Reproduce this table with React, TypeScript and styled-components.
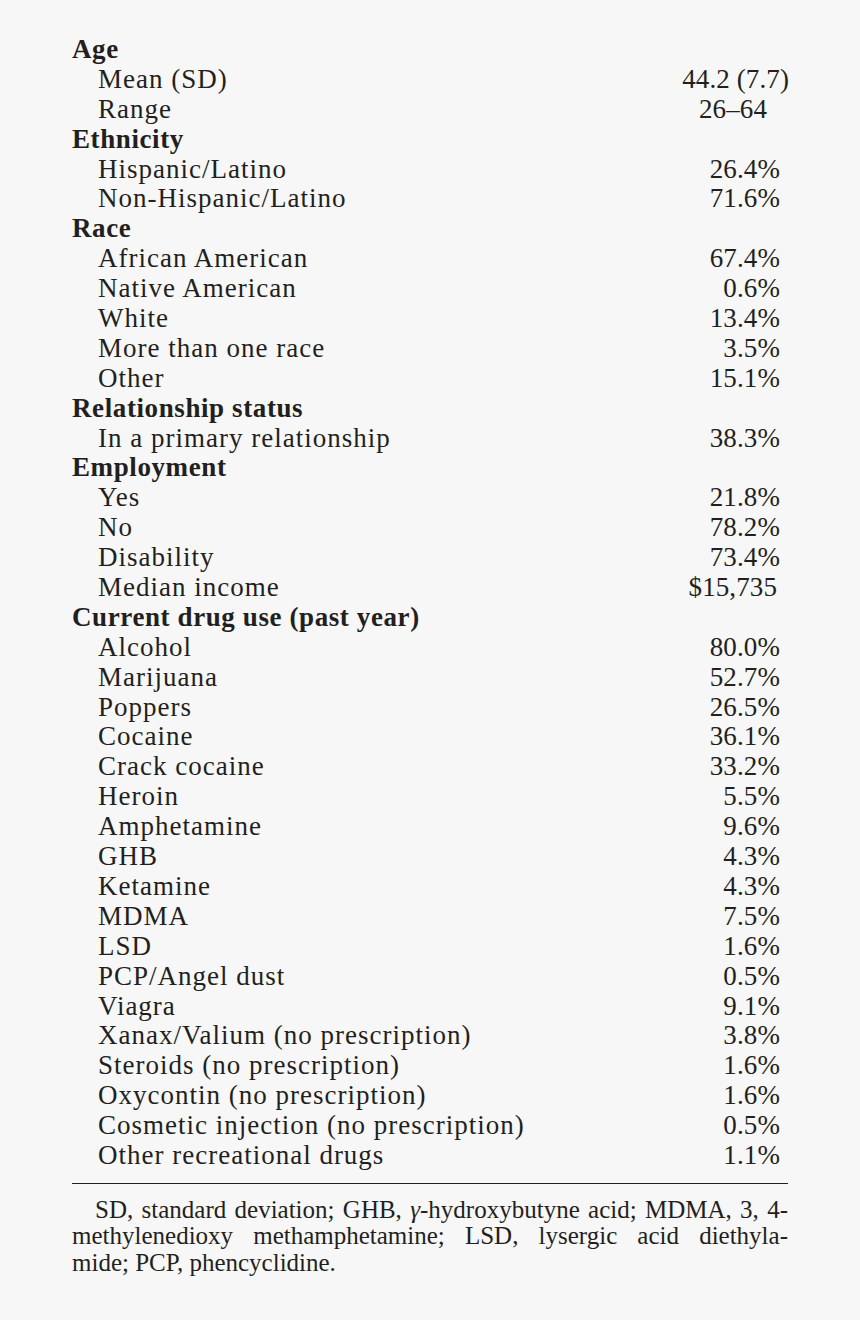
import React from 'react';
import styled, { createGlobalStyle } from 'styled-components';

type Item = { label: string; value?: string; head?: boolean; right?: number };

const rows: Item[] = [
  { label: 'Age', head: true },
  { label: 'Mean (SD)', value: '44.2 (7.7)', right: -1 },
  { label: 'Range', value: '26–64', right: 21 },
  { label: 'Ethnicity', head: true },
  { label: 'Hispanic/Latino', value: '26.4%' },
  { label: 'Non-Hispanic/Latino', value: '71.6%' },
  { label: 'Race', head: true },
  { label: 'African American', value: '67.4%' },
  { label: 'Native American', value: '0.6%' },
  { label: 'White', value: '13.4%' },
  { label: 'More than one race', value: '3.5%' },
  { label: 'Other', value: '15.1%' },
  { label: 'Relationship status', head: true },
  { label: 'In a primary relationship', value: '38.3%' },
  { label: 'Employment', head: true },
  { label: 'Yes', value: '21.8%' },
  { label: 'No', value: '78.2%' },
  { label: 'Disability', value: '73.4%' },
  { label: 'Median income', value: '$15,735', right: 11 },
  { label: 'Current drug use (past year)', head: true },
  { label: 'Alcohol', value: '80.0%' },
  { label: 'Marijuana', value: '52.7%' },
  { label: 'Poppers', value: '26.5%' },
  { label: 'Cocaine', value: '36.1%' },
  { label: 'Crack cocaine', value: '33.2%' },
  { label: 'Heroin', value: '5.5%' },
  { label: 'Amphetamine', value: '9.6%' },
  { label: 'GHB', value: '4.3%' },
  { label: 'Ketamine', value: '4.3%' },
  { label: 'MDMA', value: '7.5%' },
  { label: 'LSD', value: '1.6%' },
  { label: 'PCP/Angel dust', value: '0.5%' },
  { label: 'Viagra', value: '9.1%' },
  { label: 'Xanax/Valium (no prescription)', value: '3.8%' },
  { label: 'Steroids (no prescription)', value: '1.6%' },
  { label: 'Oxycontin (no prescription)', value: '1.6%' },
  { label: 'Cosmetic injection (no prescription)', value: '0.5%' },
  { label: 'Other recreational drugs', value: '1.1%' },
];

const GlobalStyle = createGlobalStyle`
  body {
    margin: 0;
    background: #f7f7f7;
    color: #231f20;
    font-family: "Liberation Serif", "Times New Roman", serif;
  }
`;

const Page = styled.div`
  width: 716px;
  padding: 35px 0 40px 72px;
`;

const Table = styled.div`
  display: flex;
  flex-direction: column;
`;

const Row = styled.div`
  display: flex;
  justify-content: space-between;
  align-items: center;
  height: 29.9px;
  line-height: 29.9px;
  font-size: 27px;
`;

const Label = styled.span<{ $head?: boolean }>`
  padding-left: ${(p) => (p.$head ? 0 : 26)}px;
  font-weight: ${(p) => (p.$head ? 700 : 400)};
  letter-spacing: ${(p) => (p.$head ? 0.6 : 1)}px;
  white-space: nowrap;
`;

const Value = styled.span<{ $right?: number }>`
  margin-right: ${(p) => p.$right ?? 8}px;
  letter-spacing: 0.1px;
  white-space: nowrap;
`;

const Rule = styled.div`
  margin-top: 12px;
  border-top: 1.5px solid #231f20;
`;

const Note = styled.div`
  margin-top: 13px;
  font-size: 25px;
  line-height: 26.5px;
`;

const NoteLine = styled.div<{ $indent?: boolean; $last?: boolean }>`
  text-indent: ${(p) => (p.$indent ? 23 : 0)}px;
  text-align: justify;
  text-align-last: ${(p) => (p.$last ? 'left' : 'justify')};
`;

const App = () => {
  return (
    <Page>
      <GlobalStyle />
      <Table>
        {rows.map((r, i) => (
          <Row key={i}>
            <Label $head={r.head}>{r.label}</Label>
            {r.value && <Value $right={r.right}>{r.value}</Value>}
          </Row>
        ))}
      </Table>
      <Rule />
      <Note>
        <NoteLine $indent>
          SD, standard deviation; GHB, <i>γ</i>-hydroxybutyne acid; MDMA, 3, 4-
        </NoteLine>
        <NoteLine>methylenedioxy methamphetamine; LSD, lysergic acid diethyla-</NoteLine>
        <NoteLine $last>mide; PCP, phencyclidine.</NoteLine>
      </Note>
    </Page>
  );
};

export default App;
